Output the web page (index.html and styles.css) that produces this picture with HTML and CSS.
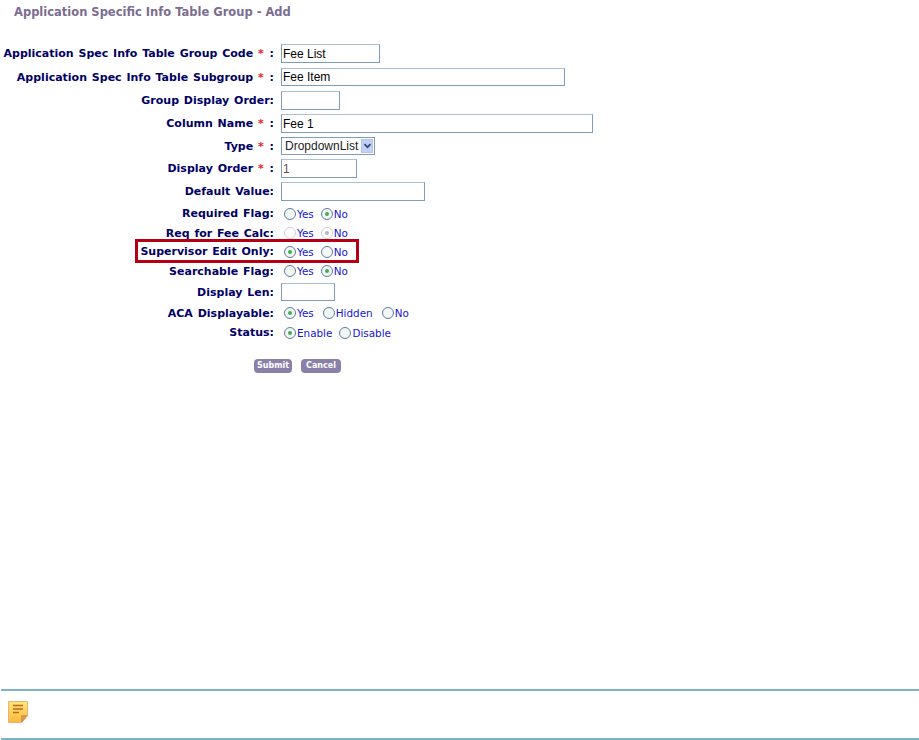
FILE: index.html
```html
<!DOCTYPE html>
<html lang="en">
<head>
<meta charset="utf-8">
<title>Application Specific Info Table Group - Add</title>
<link rel="stylesheet" href="styles.css">
</head>
<body>
<main class="content">
<h1 class="title">Application Specific Info Table Group - Add</h1>
<form class="form">
  <div class="highlight"></div>
  <label class="label">Application Spec Info Table Group Code <span class="req">*</span> :</label>
  <div class="field"><input class="text w99" type="text" value="Fee List"></div>
  <label class="label">Application Spec Info Table Subgroup <span class="req">*</span> :</label>
  <div class="field"><input class="text w284 short" type="text" value="Fee Item"></div>
  <label class="label">Group Display Order:</label>
  <div class="field"><input class="text w59" type="text"></div>
  <label class="label">Column Name <span class="req">*</span> :</label>
  <div class="field"><input class="text w312" type="text" value="Fee 1"></div>
  <label class="label">Type <span class="req">*</span> :</label>
  <div class="field">
    <div class="select">
      <span class="select-value">DropdownList</span>
      <span class="select-btn"><svg width="9" height="6" viewBox="0 0 9 6"><path d="M1.5 1.2 4.5 4.2 7.5 1.2" fill="none" stroke="#2c4a7c" stroke-width="1.7"/></svg></span>
    </div>
  </div>
  <label class="label">Display Order <span class="req">*</span> :</label>
  <div class="field"><input class="text w76 muted" type="text" value="1"></div>
  <label class="label">Default Value:</label>
  <div class="field"><input class="text w144" type="text"></div>
  <label class="label">Required Flag:</label>
  <div class="field radios"><span class="opt"><i class="radio"></i>Yes</span><span class="opt"><i class="radio on"></i>No</span></div>
  <label class="label">Req for Fee Calc:</label>
  <div class="field radios"><span class="opt"><i class="radio off"></i>Yes</span><span class="opt"><i class="radio on off"></i>No</span></div>
  <label class="label">Supervisor Edit Only:</label>
  <div class="field radios"><span class="opt"><i class="radio on"></i>Yes</span><span class="opt"><i class="radio"></i>No</span></div>
  <label class="label">Searchable Flag:</label>
  <div class="field radios"><span class="opt"><i class="radio"></i>Yes</span><span class="opt"><i class="radio on"></i>No</span></div>
  <label class="label">Display Len:</label>
  <div class="field"><input class="text w54" type="text"></div>
  <label class="label">ACA Displayable:</label>
  <div class="field radios wide"><span class="opt"><i class="radio on"></i>Yes</span><span class="opt"><i class="radio"></i>Hidden</span><span class="opt"><i class="radio"></i>No</span></div>
  <label class="label">Status:</label>
  <div class="field radios"><span class="opt"><i class="radio on"></i>Enable</span><span class="opt"><i class="radio"></i>Disable</span></div>
</form>
<div class="actions">
  <button class="btn" type="button">Submit</button>
  <button class="btn" type="button">Cancel</button>
</div>
</main>
<footer class="footer">
  <svg class="note" width="20" height="22" viewBox="0 0 20 22">
    <defs><linearGradient id="g" x1="0" y1="0" x2="0" y2="1"><stop offset="0" stop-color="#ffe77a"/><stop offset="1" stop-color="#fdb93c"/></linearGradient></defs>
    <path d="M.5 .5H19.5V14.5L13.5 21.5H.5Z" fill="url(#g)" stroke="#e6b27c"/>
    <path d="M13.5 21.5V14.5H19.5Z" fill="#d99a4a" stroke="#cf8f45" stroke-width=".7"/>
    <path d="M5 4.5H15M5 8H15M5 11.5H11" stroke="#c0651c" stroke-width="1.4"/>
  </svg>
</footer>
</body>
</html>
```

FILE: styles.css
```css
html, body {
  margin: 0;
  padding: 0;
  height: 740px;
  background: #fff;
  overflow: hidden;
}
body {
  display: flex;
  flex-direction: column;
  font-family: "DejaVu Sans", Verdana, sans-serif;
}
.content {
  flex: 1;
}
.title {
  margin: 0;
  padding: 5px 0 0 14px;
  height: 42px;
  box-sizing: border-box;
  font-size: 11.5px;
  line-height: 14px;
  font-weight: bold;
  color: #7b6d92;
}
.form {
  position: relative;
  display: grid;
  grid-template-columns: 274px 1fr;
  grid-template-rows: 23px 24px 23px 23px 22px 23px 23px 21px 18px 19px 20px 22px 20px 19px;
  column-gap: 7px;
  align-items: center;
}
.label {
  padding-top: 1px;
  text-align: right;
  font-size: 11px;
  word-spacing: 1px;
  font-weight: bold;
  line-height: 14px;
  white-space: nowrap;
  color: #000066;
}
.req {
  margin: 0 1px 0 0;
  color: #e8231c;
}
.field {
  display: flex;
  align-items: center;
}
.text {
  box-sizing: border-box;
  height: 19px;
  margin: 0;
  padding: 0 1px;
  border: 1px solid #7f9db9;
  border-top-color: #a9bfd2;
  border-radius: 0;
  background: #fff;
  font-family: "Liberation Sans", Arial, sans-serif;
  font-size: 12px;
  color: #000;
  outline: none;
}
.muted { color: #6b4a4a; }
.short { height: 18px; }
.w54 { width: 54px; height: 18px; }
.w59 { width: 59px; }
.w76 { width: 76px; }
.w99 { width: 99px; }
.w144 { width: 144px; }
.w284 { width: 284px; }
.w312 { width: 312px; }
.select {
  box-sizing: border-box;
  display: flex;
  align-items: center;
  justify-content: space-between;
  width: 94px;
  height: 18px;
  border: 1px solid #7f9db9;
  padding: 1px;
  font-family: "Liberation Sans", Arial, sans-serif;
  font-size: 12px;
  color: #222;
}
.select-value {
  padding-left: 2px;
}
.select-btn {
  display: flex;
  align-items: center;
  justify-content: center;
  width: 12px;
  height: 14px;
  background: #c3d0f5;
  border: 1px solid #b4c4ee;
  box-sizing: border-box;
}
.radios {
  gap: 7px;
  padding-left: 3px;
  font-size: 10.4px;
  line-height: 12px;
  color: #1414d2;
}
.radios.wide {
  gap: 9px;
}
.opt {
  display: inline-flex;
  align-items: center;
  gap: 1px;
}
.radio {
  box-sizing: border-box;
  position: relative;
  width: 12px;
  height: 12px;
  border: 1px solid #5a7f9a;
  border-radius: 50%;
  background: #f4f6f6;
}
.radio.on::after {
  content: "";
  position: absolute;
  left: 3px;
  top: 3px;
  width: 4px;
  height: 4px;
  border-radius: 50%;
  background: #3fae55;
}
.radio.off {
  border-color: #cfd2d2;
  background: #fff;
}
.radio.on.off::after {
  background: #b5b5b5;
}
.highlight {
  position: absolute;
  left: 135px;
  top: 197px;
  width: 224px;
  height: 24px;
  box-sizing: border-box;
  border: 3px solid #b40012;
  pointer-events: none;
}
.actions {
  display: flex;
  gap: 9px;
  padding: 17px 0 0 254px;
}
.btn {
  box-sizing: border-box;
  height: 14px;
  margin: 0;
  padding: 0;
  width: 38px;
  border: 0;
  border-radius: 4px;
  background: #8a80a8;
  color: #fff;
  font-family: "DejaVu Sans", Verdana, sans-serif;
  font-size: 8px;
  font-weight: bold;
  line-height: 14px;
  text-align: center;
}
.btn + .btn {
  width: 40px;
}
.footer {
  box-sizing: border-box;
  height: 51px;
  margin-left: 1px;
  border-top: 2px solid #7fb2c8;
  border-bottom: 2px solid #7fb2c8;
  padding: 10px 0 0 7px;
}
.note {
  display: block;
}
```
